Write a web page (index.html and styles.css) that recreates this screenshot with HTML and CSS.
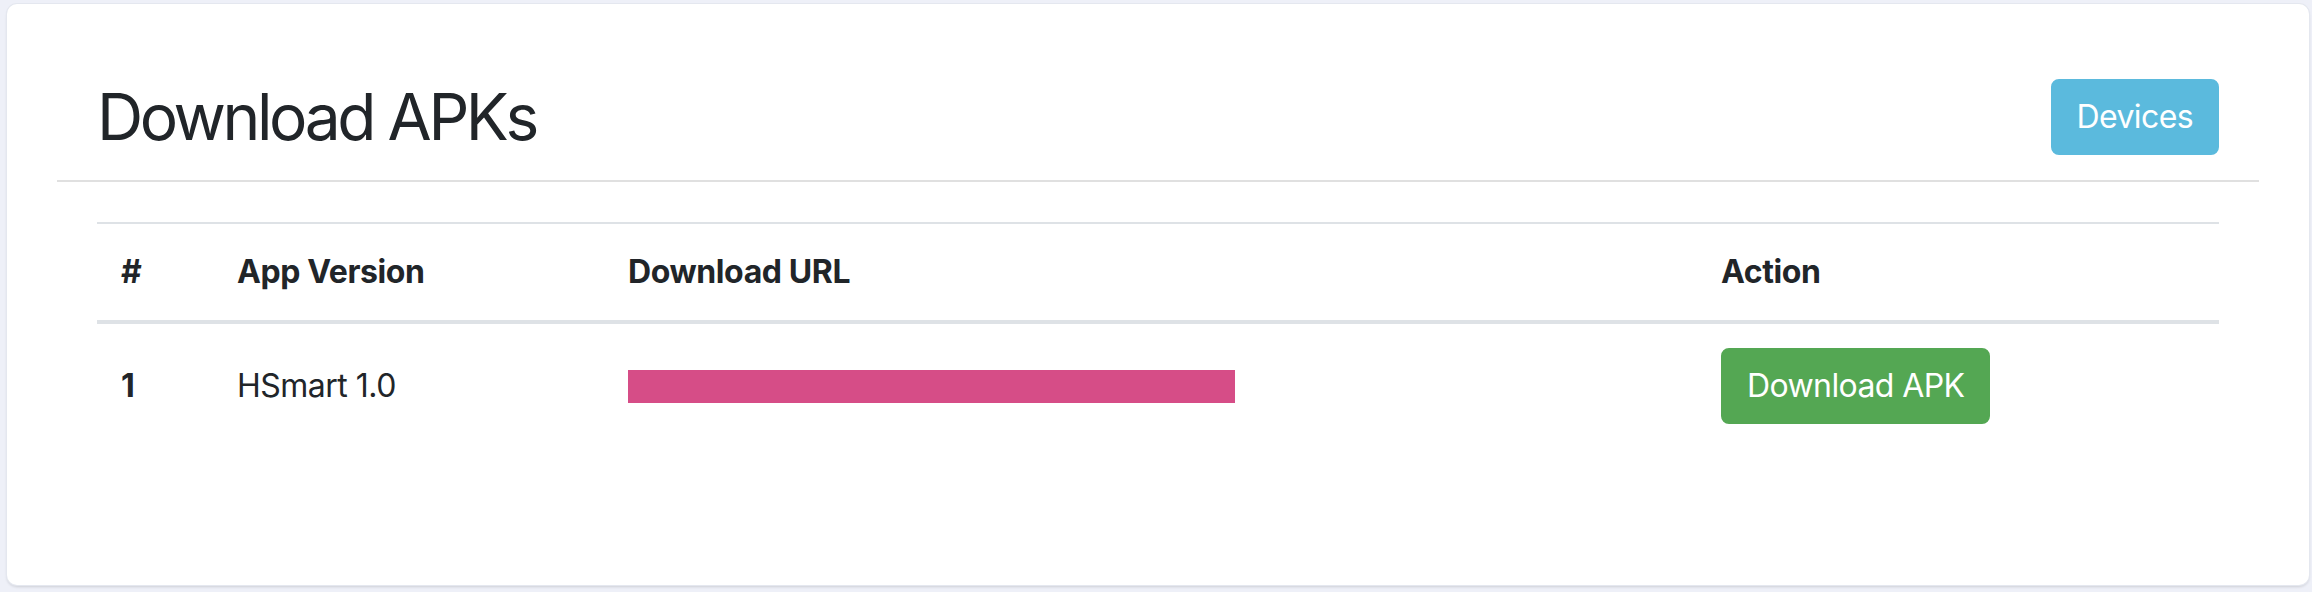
FILE: index.html
```html
<!DOCTYPE html>
<html lang="en">
<head>
<meta charset="utf-8">
<title>Download APKs</title>
<link rel="stylesheet" href="styles.css">
</head>
<body>
<div class="card">
  <div class="card-header">
    <h2 class="title">Download APKs</h2>
    <a class="btn btn-info" href="#">Devices</a>
  </div>
  <table class="table">
    <thead>
      <tr>
        <th class="col-num">#</th>
        <th class="col-ver">App Version</th>
        <th class="col-url">Download URL</th>
        <th class="col-act">Action</th>
      </tr>
    </thead>
    <tbody>
      <tr>
        <th class="row-num">1</th>
        <td>HSmart 1.0</td>
        <td><span class="redacted"></span></td>
        <td><a class="btn btn-success" href="#">Download APK</a></td>
      </tr>
    </tbody>
  </table>
</div>
</body>
</html>
```

FILE: styles.css
```css
* { box-sizing: border-box; }
html, body { margin: 0; padding: 0; }
body {
  background: #eef0f8;
  font-family: Inter, "Noto Sans", "Liberation Sans", sans-serif;
  color: #212529;
  height: 592px;
  overflow: hidden;
}
.card {
  margin: 4px 3px 0 7px;
  height: 581px;
  background: #fff;
  border-radius: 10px;
  padding: 0 50px;
  box-shadow: 0 0 0 1px #e4e7ef, 0 2px 3px rgba(0, 0, 0, 0.14);
}
.card-header {
  display: flex;
  justify-content: space-between;
  align-items: center;
  padding: 74px 40px 25px;
  border-bottom: 2px solid #e0e0e0;
}
.title {
  margin: 0;
  font-size: 64px;
  line-height: 77px;
  font-weight: 400;
  letter-spacing: -3.4px;
  color: #212529;
}
.btn {
  display: inline-block;
  font-size: 32px;
  line-height: 48px;
  padding: 12px 24px;
  border: 2px solid transparent;
  border-radius: 8px;
  color: #fff;
  text-decoration: none;
  font-weight: 400;
  letter-spacing: -0.6px;
}
.btn-info { background: #5bbadd; border-color: #5bbadd; }
.btn-success { background: #54a753; border-color: #54a753; }
.table {
  margin: 40px 40px 0;
  width: calc(100% - 80px);
  border-collapse: collapse;
  table-layout: fixed;
  font-size: 32px;
  line-height: 48px;
}
.table th, .table td {
  padding: 24px;
  text-align: left;
}
.table thead th {
  font-weight: 700;
  letter-spacing: -0.4px;
  border-top: 2px solid #dee2e6;
  border-bottom: 4px solid #dee2e6;
  vertical-align: bottom;
}
.table tbody th, .table tbody td {
  vertical-align: middle;
  border-top: 2px solid #dee2e6;
}
.table tbody td { font-weight: 400; letter-spacing: -0.5px; }
.row-num { font-weight: 700; }
.col-num { width: 116px; }
.col-ver { width: 391px; }
.col-url { width: 1093px; }
.col-act { width: 522px; }
.redacted {
  display: block;
  width: 607px;
  height: 33px;
  background: #d64d87;
}
```
